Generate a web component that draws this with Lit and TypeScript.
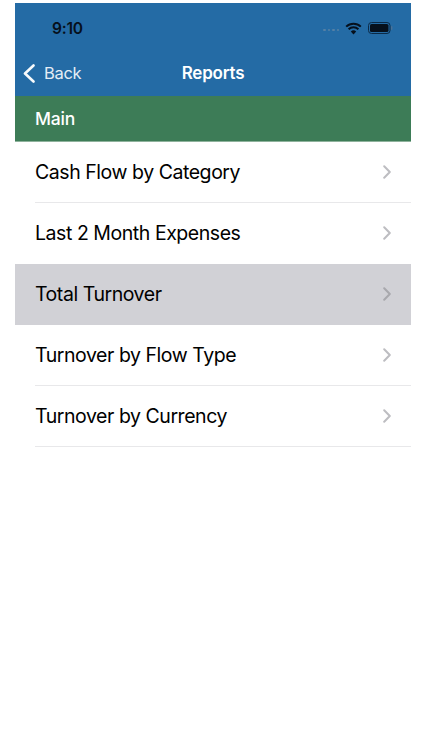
import { LitElement, html, css } from "lit";
import { customElement } from "lit/decorators.js";

const ITEMS = [
  "Cash Flow by Category",
  "Last 2 Month Expenses",
  "Total Turnover",
  "Turnover by Flow Type",
  "Turnover by Currency",
];
const SELECTED = 2;

@customElement("app-root")
export class AppRoot extends LitElement {
  static styles = css`
    :host {
      display: block;
      width: 422px;
      height: 750px;
      background: #fff;
      overflow: hidden;
      font-family: "Inter", "Liberation Sans", sans-serif;
    }
    .phone {
      margin: 3px 11px 0 15px;
      display: flex;
      flex-direction: column;
    }
    .head {
      background: #246ba5;
      height: 93px;
      display: flex;
      flex-direction: column;
      box-sizing: border-box;
    }
    .status {
      height: 50px;
      display: flex;
      align-items: center;
      padding: 0 18px 0 37px;
      gap: 6px;
    }
    .time {
      font-size: 15.5px;
      font-weight: 600;
      color: #06101c;
      flex: 1;
      letter-spacing: -0.2px;
    }
    .dots {
      display: flex;
      gap: 2px;
      margin-top: 4px;
    }
    .dots i {
      width: 2.5px;
      height: 2.5px;
      border-radius: 50%;
      background: #5580a6;
    }
    .nav {
      height: 43px;
      display: grid;
      grid-template-columns: 1fr auto 1fr;
      align-items: center;
      color: #fff;
      padding-bottom: 3px;
      box-sizing: border-box;
    }
    .back {
      display: flex;
      align-items: center;
      gap: 9px;
      padding-left: 8px;
      font-size: 16.5px;
      color: #e4edf5;
      letter-spacing: -0.3px;
    }
    .title {
      font-size: 17px;
      font-weight: 600;
      letter-spacing: -0.2px;
    }
    .section {
      background: #3d7c57;
      color: #fff;
      height: 46px;
      box-sizing: border-box;
      display: flex;
      align-items: center;
      padding-left: 20px;
      font-size: 17.5px;
      font-weight: 500;
      letter-spacing: -0.2px;
      border-bottom: 1px solid #8eb29c;
    }
    .row {
      height: 61px;
      display: flex;
      align-items: center;
      padding-left: 20px;
      font-size: 19.5px;
      letter-spacing: -0.45px;
      color: #000;
      box-sizing: border-box;
    }
    .row .inner {
      flex: 1;
      height: 100%;
      display: flex;
      align-items: center;
      justify-content: space-between;
      padding-right: 20px;
      box-sizing: border-box;
      border-bottom: 1px solid #e8e8ea;
    }
    .chev {
      stroke: #bdbdc1;
    }
    .row.sel {
      background: #d1d1d6;
    }
    .row.sel .chev {
      stroke: #a8a8ad;
    }
    .row.sel .inner,
    .row.before-sel .inner {
      border-bottom-color: transparent;
    }
    svg {
      display: block;
      flex: none;
    }
  `;

  render() {
    return html`
      <div class="phone">
        <div class="head">
          <div class="status">
            <span class="time">9:10</span>
            <span class="dots"><i></i><i></i><i></i><i></i></span>
            <svg width="17" height="13" viewBox="0 0 17 13">
              <path d="M8.5 12.5 L5.8 9.4 A4 4 0 0 1 11.2 9.4 Z" fill="#06101c" />
              <path d="M3.6 7.2 A7 7 0 0 1 13.4 7.2" fill="none" stroke="#06101c" stroke-width="2" />
              <path d="M1.2 4.6 A10.5 10.5 0 0 1 15.8 4.6" fill="none" stroke="#06101c" stroke-width="2" />
            </svg>
            <svg width="25" height="12" viewBox="0 0 25 12">
              <rect x="0.5" y="0.5" width="21.5" height="11" rx="3" fill="none" stroke="#0b2a47" />
              <rect x="2" y="2" width="18.5" height="8" rx="1.6" fill="#06101c" />
              <rect x="23" y="4" width="1.4" height="4" rx="0.7" fill="#4a7298" />
            </svg>
          </div>
          <div class="nav">
            <div class="back">
              <svg width="12" height="19" viewBox="0 0 12 19">
                <path d="M10.5 1.5 L2 9.5 L10.5 17.5" fill="none" stroke="#f7fafc" stroke-width="2.6" stroke-linecap="round" stroke-linejoin="round" />
              </svg>
              <span>Back</span>
            </div>
            <div class="title">Reports</div>
            <div></div>
          </div>
        </div>
        <div class="section">Main</div>
        ${ITEMS.map(
          (t, i) => html`
            <div class="row ${i === SELECTED ? "sel" : ""} ${i === SELECTED - 1 ? "before-sel" : ""}">
              <div class="inner">
                <span>${t}</span>
                <svg width="8" height="14" viewBox="0 0 8 14">
                  <path class="chev" d="M1.2 1.2 L6.8 7 L1.2 12.8" fill="none" stroke-width="2" stroke-linecap="round" stroke-linejoin="round" />
                </svg>
              </div>
            </div>
          `
        )}
      </div>
    `;
  }
}
